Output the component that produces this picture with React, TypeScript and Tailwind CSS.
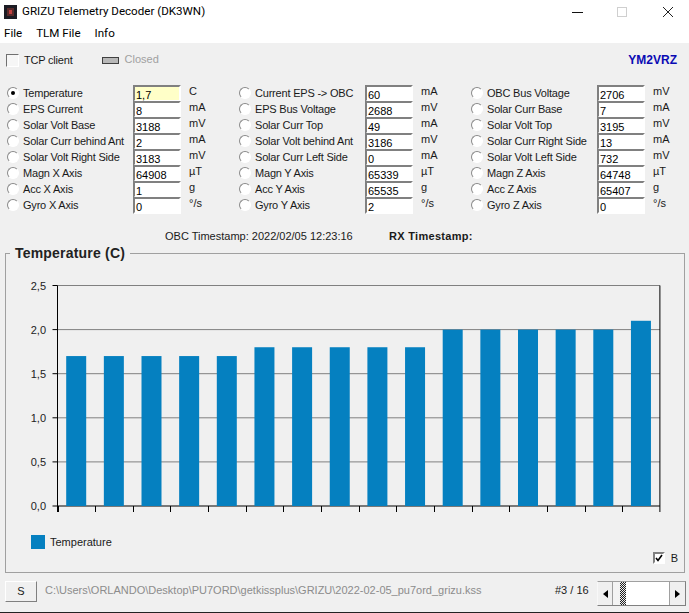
import React from "react";

type Cell = { label: string; value: string; unit: string; checked?: boolean; hl?: boolean };

const columns: Cell[][] = [
  [
    { label: "Temperature", value: "1,7", unit: "C", checked: true, hl: true },
    { label: "EPS Current", value: "8", unit: "mA" },
    { label: "Solar Volt Base", value: "3188", unit: "mV" },
    { label: "Solar Curr behind Ant", value: "2", unit: "mA" },
    { label: "Solar Volt Right Side", value: "3183", unit: "mV" },
    { label: "Magn X Axis", value: "64908", unit: "µT" },
    { label: "Acc X Axis", value: "1", unit: "g" },
    { label: "Gyro X Axis", value: "0", unit: "°/s" },
  ],
  [
    { label: "Current EPS -> OBC", value: "60", unit: "mA" },
    { label: "EPS Bus Voltage", value: "2688", unit: "mV" },
    { label: "Solar Curr Top", value: "49", unit: "mA" },
    { label: "Solar Volt behind Ant", value: "3186", unit: "mV" },
    { label: "Solar Curr Left Side", value: "0", unit: "mA" },
    { label: "Magn Y Axis", value: "65339", unit: "µT" },
    { label: "Acc Y Axis", value: "65535", unit: "g" },
    { label: "Gyro Y Axis", value: "2", unit: "°/s" },
  ],
  [
    { label: "OBC Bus Voltage", value: "2706", unit: "mV" },
    { label: "Solar Curr Base", value: "7", unit: "mA" },
    { label: "Solar Volt Top", value: "3195", unit: "mV" },
    { label: "Solar Curr Right Side", value: "13", unit: "mA" },
    { label: "Solar Volt Left Side", value: "732", unit: "mV" },
    { label: "Magn Z Axis", value: "64748", unit: "µT" },
    { label: "Acc Z Axis", value: "65407", unit: "g" },
    { label: "Gyro Z Axis", value: "0", unit: "°/s" },
  ],
];

const values = [1.7, 1.7, 1.7, 1.7, 1.7, 1.8, 1.8, 1.8, 1.8, 1.8, 2, 2, 2, 2, 2, 2.1];
const LEFT = 51.5;
const STEP = 37.65;
const TOP = 31.5;
const BASE = 252;
const yOf = (v: number) => BASE - (v / 2.5) * (BASE - TOP);

function Radio({ checked }: { checked?: boolean }) {
  return (
    <span className="flex h-3 w-3 shrink-0 items-center justify-center rounded-full border border-t-[#8a8a8a] border-l-[#8a8a8a] border-r-white border-b-white bg-white">
      {checked && <span className="h-1 w-1 rounded-full bg-black" />}
    </span>
  );
}

function Row({ cell }: { cell: Cell }) {
  return (
    <div className="flex h-4 items-center pl-[7px]">
      <Radio checked={cell.checked} />
      <span className="ml-1 w-[110px] shrink-0 whitespace-nowrap tracking-[-0.2px] text-[#1a1a1a]">{cell.label}</span>
      <div
        className={`h-[17px] w-12 shrink-0 border-2 border-t-[#808080] border-l-[#808080] border-r-white border-b-white pl-px leading-[16px] text-black ${
          cell.hl ? "bg-[#ffffc8]" : "bg-white"
        }`}
      >
        {cell.value}
      </div>
      <span className="ml-2 -mt-[3px] text-[#1a1a1a]">{cell.unit}</span>
    </div>
  );
}

function Chart() {
  return (
    <svg width="673" height="270" className="block">
      {[0, 0.5, 1, 1.5, 2, 2.5].map((v) => (
        <g key={v}>
          <line x1={LEFT} x2={LEFT + STEP * 16} y1={yOf(v)} y2={yOf(v)} stroke={v === 0 ? "#000" : "#808080"} />
          <line x1={LEFT - 5} x2={LEFT} y1={yOf(v)} y2={yOf(v)} stroke="#000" />
          <text x={40} y={yOf(v) + 4} textAnchor="end" fontSize="11" fill="#222">
            {v.toFixed(1).replace(".", ",")}
          </text>
        </g>
      ))}
      {values.map((v, i) => (
        <rect key={i} x={LEFT + 8.7 + i * STEP} y={yOf(v)} width={20} height={BASE - yOf(v)} fill="#0580c0" />
      ))}
      <line x1={LEFT} x2={LEFT} y1={TOP} y2={BASE + 6} stroke="#000" />
      <line x1={LEFT + STEP * 16} x2={LEFT + STEP * 16} y1={TOP} y2={BASE + 6} stroke="#000" />
      {values.map((_, i) => (
        <line key={i} x1={Math.round(LEFT + i * STEP) + 0.5} x2={Math.round(LEFT + i * STEP) + 0.5} y1={BASE} y2={BASE + 6} stroke="#000" />
      ))}
    </svg>
  );
}

export default function App() {
  return (
    <div
      className="flex h-[613px] w-[689px] flex-col overflow-hidden bg-[#f0f0f0] text-[11px] text-[#1a1a1a]"
      style={{ fontFamily: "'Liberation Sans', Arial, sans-serif" }}
    >
      {/* Title bar */}
      <div className="flex h-[24px] items-center bg-white pl-[4px] text-[11.6px] text-black" style={{ fontFamily: "Roboto, sans-serif" }}>
        <svg width="13" height="14" viewBox="0 0 13 14" className="mr-[5px] shrink-0">
          <rect width="13" height="14" fill="#1c1c24" />
          <rect x="3" y="3" width="7" height="8" fill="#5a2a2a" />
          <rect x="5" y="5" width="3" height="4" fill="#c04040" />
        </svg>
        <span>GRIZU Telemetry Decoder (DK3WN)</span>
        <div className="ml-auto flex items-center">
          <svg width="12" height="12" viewBox="0 0 12 12" className="mr-[33px]">
            <line x1="1" y1="6.5" x2="12" y2="6.5" stroke="#111" />
          </svg>
          <svg width="12" height="12" viewBox="0 0 12 12" className="mr-[34px]">
            <rect x="1.5" y="1.5" width="9" height="9" fill="none" stroke="#cfcfcf" />
          </svg>
          <svg width="12" height="12" viewBox="0 0 12 12" className="mr-[15px]">
            <path d="M1 1L11 11M11 1L1 11" stroke="#222" />
          </svg>
        </div>
      </div>

      {/* Menu */}
      <div className="flex h-[19px] items-center gap-[14px] bg-white pl-[4px] text-[11.6px] text-black" style={{ fontFamily: "Roboto, sans-serif" }}>
        <span>File</span>
        <span>TLM File</span>
        <span>Info</span>
      </div>

      {/* Connection row */}
      <div className="flex h-[42px] items-center pb-[8px] pl-[6px]">
        <span className="h-[13px] w-[13px] border border-t-[#707070] border-l-[#707070] border-r-white border-b-white bg-[#f6f6f6]" />
        <span className="ml-[5px] tracking-[-0.2px]">TCP client</span>
        <span className="ml-[29px] h-[7px] w-[17px] border border-[#404040] bg-[#b8b8b8]" />
        <span className="ml-[6px] -mt-[2px] text-[#a0a0a0]">Closed</span>
        <span className="ml-auto mr-[12px] text-[12px] font-bold text-[#0a0ab4]">YM2VRZ</span>
      </div>

      {/* Telemetry grid */}
      <div className="flex">
        {columns.map((col, i) => (
          <div key={i} className="w-[232px] shrink-0">
            {col.map((c) => (
              <Row key={c.label} cell={c} />
            ))}
          </div>
        ))}
      </div>

      {/* Timestamps */}
      <div className="mt-[15px] flex h-[16px] items-center pl-[165px]">
        <span className="w-[224px] shrink-0">OBC Timestamp: 2022/02/05 12:23:16</span>
        <span className="font-bold tracking-[0.3px]">RX Timestamp:</span>
      </div>

      {/* Chart group */}
      <div className="relative ml-[5px] mt-[9px] h-[320px] w-[680px] border border-[#a0a0a0]">
        <span className="absolute -top-[10px] left-[4px] bg-[#f0f0f0] px-[5px] text-[14px] font-bold leading-[18px] tracking-[0.2px] text-[#222]">
          Temperature (C)
        </span>
        <Chart />
        <div className="ml-[25px] mt-[10px] flex items-center">
          <span className="h-[14px] w-[14px] bg-[#0580c0]" />
          <span className="ml-[5px]">Temperature</span>
        </div>
        <div className="-mt-px flex items-center justify-end pr-[6px]">
          <span className="flex h-[12px] w-[12px] items-center justify-center border-2 border-t-[#808080] border-l-[#808080] border-r-white border-b-white bg-white">
            <svg width="8" height="8" viewBox="0 0 8 8">
              <path d="M1 4L3 6.5L7 1" fill="none" stroke="#000" strokeWidth="1.6" />
            </svg>
          </span>
          <span className="ml-[6px]">B</span>
        </div>
      </div>

      {/* Bottom */}
      <div className="mt-[8px] flex items-start pl-[5px]">
        <button className="h-[21px] w-[32px] border border-t-white border-l-white border-r-[#808080] border-b-[#808080] bg-[#f0f0f0] text-[11px]">
          S
        </button>
        <span className="ml-[8px] mt-[1px] w-[510px] shrink-0 whitespace-nowrap text-[#8c8c8c]">
          C:\Users\ORLANDO\Desktop\PU7ORD\getkissplus\GRIZU\2022-02-05_pu7ord_grizu.kss
        </span>
        <span className="mt-[1px] w-[42px] shrink-0 whitespace-nowrap">#3 / 16</span>
        <div className="flex h-[25px] w-[89px] shrink-0 border border-t-[#a0a0a0] border-l-[#f8f8f8] border-r-[#808080] border-b-[#808080]">
          <span className="flex w-[15px] items-center justify-center border-r border-[#a0a0a0] bg-[#f0f0f0]">
            <svg width="5" height="8" viewBox="0 0 5 8"><path d="M5 0V8L0 4Z" fill="#000" /></svg>
          </span>
          <span className="w-[7px] bg-[#f4f4f4]" />
          <span className="w-[6px] bg-[repeating-conic-gradient(#222_0%_25%,#eee_0%_50%)] bg-[length:2px_2px]" />
          <span className="flex-1 bg-white" />
          <span className="flex w-[16px] items-center justify-center border-l border-[#a0a0a0] bg-[#f0f0f0]">
            <svg width="5" height="8" viewBox="0 0 5 8"><path d="M0 0V8L5 4Z" fill="#000" /></svg>
          </span>
        </div>
      </div>
      <div className="mt-auto h-px bg-[#222]" />
    </div>
  );
}
